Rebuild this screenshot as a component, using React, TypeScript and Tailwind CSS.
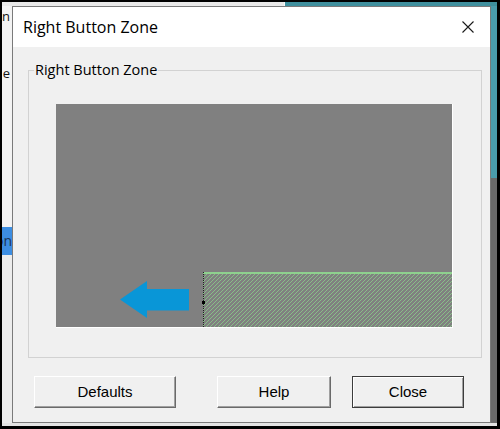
import React from "react";

function Arrow() {
  return (
    <svg width="69" height="37" viewBox="0 0 69 37" className="block">
      <path d="M0 18.5 L27 0 L27 8 L69 8 L69 29.5 L27 29.5 L27 37 Z" fill="#0996d7" />
    </svg>
  );
}

function CloseX() {
  return (
    <svg width="12" height="12" viewBox="0 0 12 12" className="block">
      <path d="M0.5 0.5 L11.5 11.5 M11.5 0.5 L0.5 11.5" stroke="#1a1a1a" strokeWidth="1.1" fill="none" />
    </svg>
  );
}

function Hatch() {
  return (
    <svg className="absolute inset-0 w-full h-full block" shapeRendering="crispEdges">
      <defs>
        <pattern id="hatch" patternUnits="userSpaceOnUse" width="4" height="4">
          <rect width="4" height="4" fill="#808080" />
          <rect x="0" y="3" width="1" height="1" fill="#88bd88" />
          <rect x="1" y="2" width="1" height="1" fill="#88bd88" />
          <rect x="2" y="1" width="1" height="1" fill="#88bd88" />
          <rect x="3" y="0" width="1" height="1" fill="#88bd88" />
        </pattern>
      </defs>
      <rect width="100%" height="100%" fill="url(#hatch)" />
    </svg>
  );
}

export default function App() {
  const sans = { fontFamily: '"Open Sans", "Noto Sans", sans-serif' };
  const btnFont = { fontFamily: '"Liberation Sans", Arial, sans-serif' };
  return (
    <div className="w-[500px] h-[429px] bg-black pt-[2px] pl-[2px] pr-[3px] pb-[3px] flex flex-col">
      <div className="flex-1 flex flex-col bg-[#e6e6e6]">
        {/* top strip */}
        <div className="h-[4px] flex shrink-0">
          <div className="w-[282px] bg-[#e9e9e9]" />
          <div className="w-[1px] bg-[#f7f7f7]" />
          <div className="flex-1 bg-[#3f8f9d]" />
        </div>
        {/* middle */}
        <div className="h-[417px] flex shrink-0">
          {/* left strip: window behind */}
          <div className="w-[10px] flex flex-col overflow-hidden bg-[#f3f3f3] text-[13px] text-[#111]" style={sans}>
            <div className="h-[20px] leading-[20px] flex justify-end pr-[2px] shrink-0">
              <span className="shrink-0 whitespace-nowrap">n</span>
            </div>
            <div className="h-[20px] mt-[37px] leading-[20px] flex justify-end pr-[2px] shrink-0">
              <span className="shrink-0 whitespace-nowrap">e</span>
            </div>
            <div className="h-[28px] mt-[144px] leading-[28px] flex justify-end shrink-0 bg-[#3d8ee2] text-[14px] text-[#1b3558]">
              <span className="shrink-0 whitespace-nowrap">on</span>
            </div>
            <div className="flex-1 bg-[#ececec]" />
          </div>
          {/* dialog */}
          <div className="w-[479px] border border-[#7a7a7a] bg-[#f0f0f0] flex flex-col">
            <div className="h-[40px] bg-white flex items-center justify-between pl-[10px] pr-[16px] shrink-0">
              <span className="text-[16px] text-black leading-none" style={sans}>Right Button Zone</span>
              <CloseX />
            </div>
            <div className="flex-1 flex flex-col">
              {/* group box */}
              <div className="mt-[23px] ml-[15px] mr-[8px] h-[288px] border border-[#d2d2d2] flex flex-col">
                <div
                  className="-mt-[11px] ml-[5px] self-start px-[1px] bg-[#f0f0f0] leading-[20px] text-[14.5px] text-black"
                  style={sans}
                >
                  Right Button Zone
                </div>
                <div className="mt-[24px] ml-[27px] w-[397px] h-[224px] border-r border-b border-white flex flex-col">
                  <div className="flex-1 bg-[#808080] flex flex-col justify-end">
                    <div className="h-[55px] flex">
                      <div className="w-[147px] flex items-center pl-[64px]">
                        <Arrow />
                      </div>
                      <div className="flex-1 relative border-t-2 border-t-[#8ed08e]">
                        <Hatch />
                        <span className="absolute left-0 -top-[2px] bottom-0 w-px bg-[repeating-linear-gradient(180deg,#1e1e1e_0px,#1e1e1e_1px,transparent_1px,transparent_2px)]" />
                        <span className="absolute -left-[1px] top-[27px] w-[3px] h-[3px] bg-black" />
                      </div>
                    </div>
                  </div>
                </div>
              </div>
              {/* buttons */}
              <div className="mt-[18px] ml-[21px] flex text-[15px] text-black" style={btnFont}>
                <button className="w-[142px] h-[32px] bg-[#f0f0f0] border-t border-l border-t-white border-l-white border-b border-r border-b-[#6a6a6a] border-r-[#6a6a6a] shadow-[inset_-1px_-1px_0_#a0a0a0]">
                  Defaults
                </button>
                <button className="ml-[41px] w-[114px] h-[32px] bg-[#f0f0f0] border-t border-l border-t-white border-l-white border-b border-r border-b-[#6a6a6a] border-r-[#6a6a6a] shadow-[inset_-1px_-1px_0_#a0a0a0]">
                  Help
                </button>
                <button className="ml-[21px] w-[112px] h-[32px] bg-[#f0f0f0] border border-[#3c3c3c] shadow-[inset_1px_1px_0_#ffffff,inset_-1px_-1px_0_#a0a0a0]">
                  Close
                </button>
              </div>
            </div>
          </div>
          {/* right strip */}
          <div className="w-[6px] flex flex-col">
            <div className="h-[172px] bg-[#4a9bab]" />
            <div className="flex-1 bg-[#6a6a6a]" />
          </div>
        </div>
        <div className="flex-1 bg-[#e4e4e4]" />
      </div>
    </div>
  );
}
